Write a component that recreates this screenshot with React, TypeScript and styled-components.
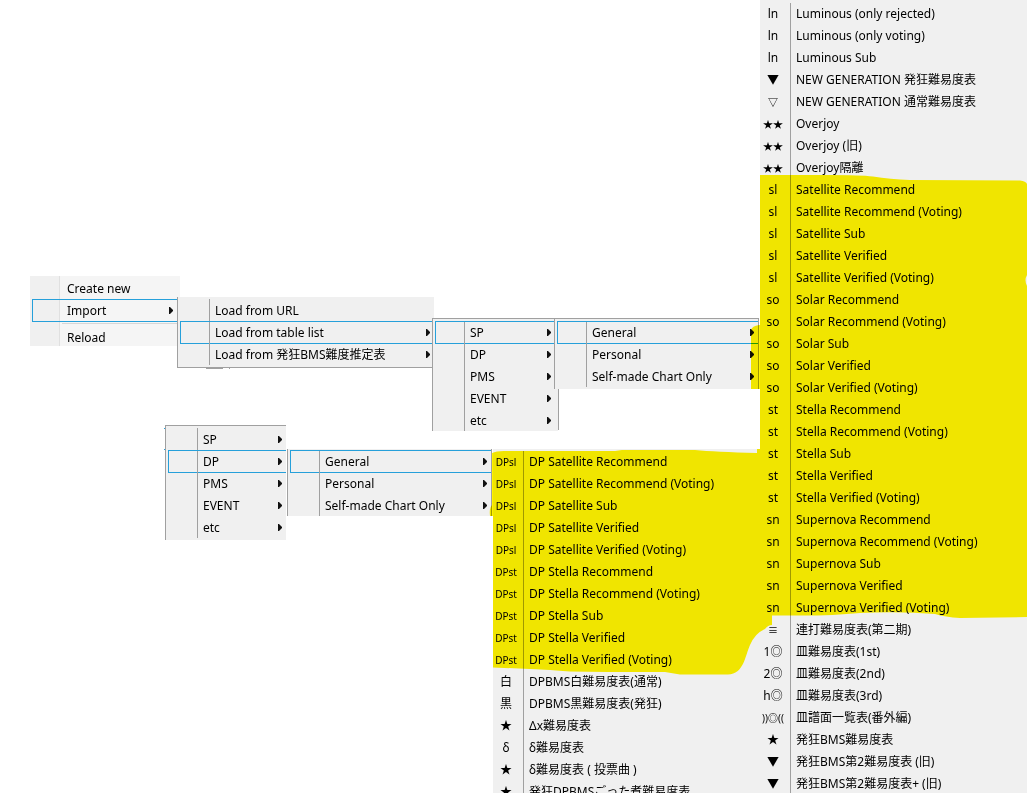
import React from "react";
import styled, { createGlobalStyle, css } from "styled-components";

const GlobalStyle = createGlobalStyle`
  * { box-sizing: border-box; }
  body { margin: 0; background: #fff; }
`;

const Canvas = styled.main`
  position: relative;
  display: flex;
  align-items: stretch;
  height: 100vh;
  padding-right: 6px;
  overflow: hidden;
  color: #000;
  font-family: "Noto Sans", "Noto Sans CJK JP", sans-serif;
  font-size: 12px;
  line-height: 22px;
`;

const Cascades = styled.section`
  flex: 1;
  min-width: 0;
  display: flex;
  flex-direction: column;
  padding-top: 276px;
`;

const Cascade = styled.nav<{ $indent: number }>`
  display: flex;
  align-items: flex-start;
  padding-left: ${(p) => p.$indent}px;

  & + & {
    flex: 1;
    margin-top: -6px;
  }
`;

type Edge = "top" | "right" | "bottom" | "left";

/* $drop: how far the submenu opens below the first menu; $overlap: how far it covers its parent */
const Menu = styled.ul<{
  $width?: number;
  $drop?: number;
  $overlap?: number;
  $padTop?: number;
  $padBottom?: number;
  $edges?: Edge[];
}>`
  isolation: isolate;
  flex: ${(p) => (p.$width ? "none" : "1")};
  width: ${(p) => (p.$width ? `${p.$width}px` : "auto")};
  margin: ${(p) => p.$drop ?? 0}px 0 0 ${(p) => -(p.$overlap ?? 0)}px;
  padding: ${(p) => p.$padTop ?? 0}px 0 ${(p) => p.$padBottom ?? 0}px;
  list-style: none;
  background: #f0f0f0;
  ${(p) =>
    (p.$edges ?? []).map(
      (edge) => css`
        border-${edge}: 1px solid #a0a0a0;
      `
    )}
`;

const RootMenu = styled(Menu)`
  height: 70px;
  background: linear-gradient(to right, #f0f0f0 29px, #e0e0e0 29px, #e0e0e0 30px, #f5f5f5 30px);
`;

const TallMenu = styled(Menu)`
  align-self: stretch;
`;

const Row = styled.button<{ $active?: boolean }>`
  position: relative;
  display: flex;
  align-items: stretch;
  width: 100%;
  height: 22px;
  padding: 0;
  border: 0;
  background: transparent;
  color: inherit;
  font: inherit;
  text-align: left;
  white-space: nowrap;

  ${(p) =>
    p.$active &&
    css`
      &::after {
        content: "";
        position: absolute;
        inset: 0 0 -1px 2px;
        border: 1px solid #26a0da;
        border-right: 0;
      }
    `}
`;

const Gutter = styled.span<{ $plain?: boolean }>`
  flex: none;
  width: 32px;
  border-right: 1px solid ${(p) => (p.$plain ? "transparent" : "#a0a0a0")};
`;

const CodeGutter = styled.span`
  flex: none;
  display: flex;
  justify-content: center;
  width: 31px;
  padding-right: 4px;
  border-right: 1px solid #a0a0a0;
`;

const Code = styled.span<{ $small?: boolean }>`
  font-size: ${(p) => (p.$small ? 10 : 12)}px;
`;

const Label = styled.span<{ $menu?: boolean }>`
  flex: 1;
  padding-left: 5px;
  line-height: ${(p) => (p.$menu ? 24 : 22)}px;
`;

const Arrow = styled.svg<{ $covered?: boolean }>`
  flex: none;
  width: 4px;
  height: 7px;
  margin: 8px ${(p) => (p.$covered ? 7 : 4)}px 0 0;
`;

const Rule = styled.hr`
  height: 1px;
  margin: 2px 0 2px 32px;
  border: 0;
  background: #d7d7d7;
`;

const Overlay = styled.svg`
  position: absolute;
  left: 0;
  top: 0;
  overflow: visible;
  pointer-events: none;
`;

const Marker = styled(Overlay)`
  mix-blend-mode: multiply;
`;

type Item = { label: string; active?: boolean; sub?: boolean };

const MenuItem = ({ item, plain, covered }: { item: Item; plain?: boolean; covered?: boolean }) => (
  <li>
    <Row type="button" $active={item.active}>
      <Gutter $plain={plain} />
      <Label $menu>{item.label}</Label>
      {item.sub && (
        <Arrow $covered={covered} viewBox="0 0 4 7" aria-hidden="true">
          <path d="M0 0H1L4 3V4L1 7H0Z" fill="#111" />
        </Arrow>
      )}
    </Row>
  </li>
);

const smallCodes = ["★★", "▽", "≡"];

const TableItem = ({ code, label }: { code: string; label: string }) => (
  <li>
    <Row type="button">
      <CodeGutter>
        <Code $small={code.length > 2 || smallCodes.includes(code)}>{code}</Code>
      </CodeGutter>
      <Label>{label}</Label>
    </Row>
  </li>
);

const loadItems: Item[] = [
  { label: "Load from URL" },
  { label: "Load from table list", active: true, sub: true },
  { label: "Load from 発狂BMS難度推定表", sub: true },
];

const modes = (active: string): Item[] =>
  ["SP", "DP", "PMS", "EVENT", "etc"].map((label) => ({
    label,
    active: label === active,
    sub: true,
  }));

const groups: Item[] = [
  { label: "General", active: true, sub: true },
  { label: "Personal", sub: true },
  { label: "Self-made Chart Only", sub: true },
];

const variants = ["Recommend", "Recommend (Voting)", "Sub", "Verified", "Verified (Voting)"];
const series = (code: string, name: string): [string, string][] =>
  variants.map((v) => [code, `${name} ${v}`]);

const spTables: [string, string][] = [
  ["ln", "Luminous (only rejected)"],
  ["ln", "Luminous (only voting)"],
  ["ln", "Luminous Sub"],
  ["▼", "NEW GENERATION 発狂難易度表"],
  ["▽", "NEW GENERATION 通常難易度表"],
  ["★★", "Overjoy"],
  ["★★", "Overjoy (旧)"],
  ["★★", "Overjoy隔離"],
  ...series("sl", "Satellite"),
  ...series("so", "Solar"),
  ...series("st", "Stella"),
  ...series("sn", "Supernova"),
  ["≡", "連打難易度表(第二期)"],
  ["1◎", "皿難易度表(1st)"],
  ["2◎", "皿難易度表(2nd)"],
  ["h◎", "皿難易度表(3rd)"],
  ["))◎((", "皿譜面一覧表(番外編)"],
  ["★", "発狂BMS難易度表"],
  ["▼", "発狂BMS第2難易度表 (旧)"],
  ["▼", "発狂BMS第2難易度表+ (旧)"],
];

const dpTables: [string, string][] = [
  ...series("DPsl", "DP Satellite"),
  ...series("DPst", "DP Stella"),
  ["白", "DPBMS白難易度表(通常)"],
  ["黒", "DPBMS黒難易度表(発狂)"],
  ["★", "Δx難易度表"],
  ["δ", "δ難易度表"],
  ["★", "δ難易度表 ( 投票曲 )"],
  ["★", "発狂DPBMSごった煮難易度表"],
];

export default function App() {
  return (
    <>
      <GlobalStyle />
      <Canvas>
        <Overlay width="600" height="500" aria-hidden="true">
          <path d="M206 368.500H223M229.500 367V369M432.500 374V380M558.500 389V430" stroke="#a0a0a0" fill="none" />
          <path d="M164 428.500H166M164 449.500H166" stroke="#26a0da" fill="none" />
        </Overlay>

        <Cascades>
          <Cascade $indent={30}>
            <RootMenu $width={150} $padTop={1}>
              <MenuItem plain item={{ label: "Create new" }} />
              <MenuItem plain covered item={{ label: "Import", active: true, sub: true }} />
              <li role="separator">
                <Rule />
              </li>
              <MenuItem plain item={{ label: "Reload" }} />
            </RootMenu>
            <Menu $width={257} $drop={21} $overlap={3} $padTop={2} $padBottom={2} $edges={["left", "bottom"]}>
              {loadItems.map((item) => (
                <MenuItem key={item.label} item={item} />
              ))}
            </Menu>
            <Menu $width={126} $drop={42} $overlap={2} $padTop={2} $edges={["left", "top"]}>
              {modes("SP").map((item) => (
                <MenuItem key={item.label} covered item={item} />
              ))}
            </Menu>
            <Menu $width={205} $drop={42} $overlap={4} $padTop={2} $padBottom={2} $edges={["left", "top", "right"]}>
              {groups.map((item) => (
                <MenuItem key={item.label} item={item} />
              ))}
            </Menu>
          </Cascade>

          <Cascade $indent={165}>
            <Menu $width={121} $padTop={2} $padBottom={2} $edges={["left", "top"]}>
              {modes("DP").map((item) => (
                <MenuItem key={item.label} item={item} />
              ))}
            </Menu>
            <Menu $width={205} $drop={24} $overlap={-1} $padTop={1} $edges={["left", "right"]}>
              {groups.map((item) => (
                <MenuItem key={item.label} item={item} />
              ))}
            </Menu>
            <TallMenu $drop={24} $overlap={-1} $padTop={2}>
              {dpTables.map(([code, label]) => (
                <TableItem key={label} code={code} label={label} />
              ))}
            </TallMenu>
          </Cascade>
        </Cascades>

        <TallMenu $width={267} $padTop={3}>
          {spTables.map(([code, label]) => (
            <TableItem key={label} code={code} label={label} />
          ))}
        </TallMenu>

        <Marker width="1033" height="793" aria-hidden="true">
          <path
            fill="#fff400"
            d="M760 175 H830 Q860 175 873 176.500 Q890 179 910 180 L1020 180.500 Q1026 181 1027 184 V275 Q1024 280 1027 286 V617 L960 618 Q945 617 935 614 Q900 611 860 613 Q830 616 790 615.500 H772 V625 Q768 625 765 629 Q755 633 750 645 C745 656 744 674 728 674.500 H680 L665 672 Q600 672 570 671.500 Q540 669 530 669 L493 667.500 V516 H490 Q489 508 492 505 V453 Q496 451 504 451 H615 L622 450 H695 Q715 452 757 453 V449 H760 V389 H751 V330 Q752 326 759 325 H760 Z"
          />
        </Marker>
      </Canvas>
    </>
  );
}
